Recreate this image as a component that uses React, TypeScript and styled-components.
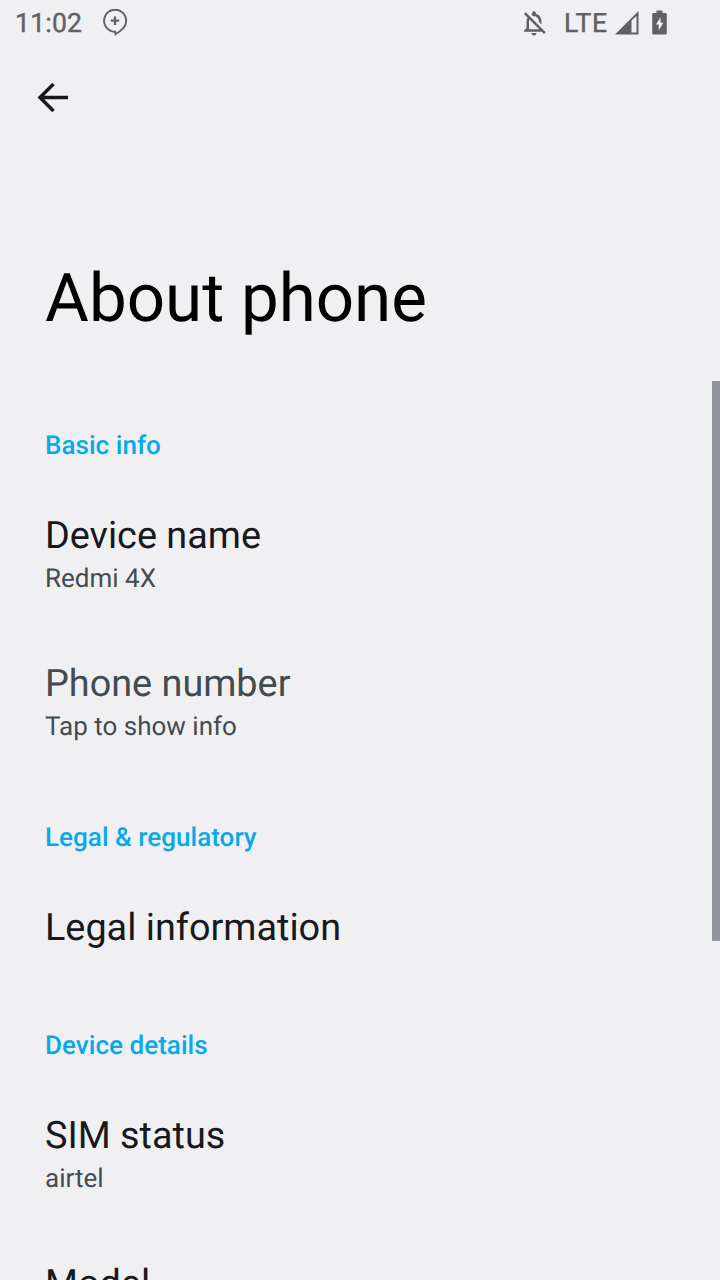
import React from "react";
import styled, { createGlobalStyle } from "styled-components";

const GlobalStyle = createGlobalStyle`
  * { box-sizing: border-box; }
  html, body { margin: 0; background: #f0f0f2; }
  body { font-family: Roboto, sans-serif; text-rendering: geometricPrecision; overflow: hidden; }
`;

const Screen = styled.main`
  position: relative;
  display: flex;
  flex-direction: column;
  width: 720px;
  height: 1280px;
  overflow: hidden;
  background: #f0f0f2;
`;

const StatusBar = styled.header`
  display: flex;
  align-items: center;
  flex: none;
  height: 48px;
  padding: 0 52px 3px 15px;
  color: #616163;
  font-size: 26.6px;
  font-weight: 400;
  -webkit-text-stroke: 0.4px #616163;
`;

const Clock = styled.span`
  width: 67px;
  margin-right: 20px;
  padding-top: 2px;
  letter-spacing: 0.2px;
`;

const StatusIcons = styled.div`
  display: flex;
  align-items: center;
  margin-left: auto;
`;

const Network = styled.span`
  width: 44px;
  margin: 0 6px 0 15px;
  padding-top: 1px;
  letter-spacing: 0.7px;
`;

const Battery = styled.svg`
  display: block;
  flex: none;
  margin-left: 12px;
`;

const Icon = styled.svg`
  display: block;
  flex: none;
`;

const Toolbar = styled.nav`
  display: flex;
  flex: none;
  height: 213px;
  padding: 30px 0 0 33px;
`;

const BackButton = styled.button`
  width: 40px;
  height: 40px;
  padding: 0;
  border: 0;
  background: none;
  color: #17181b;
`;

const Title = styled.h1`
  flex: none;
  height: 152px;
  margin: 0;
  padding-left: 45px;
  font-size: 67.3px;
  font-weight: 400;
  line-height: 76px;
  color: #000;
`;

const Category = styled.h2`
  flex: none;
  height: 90px;
  margin: 0;
  padding: 18px 45px 0;
  font-size: 26px;
  font-weight: 500;
  line-height: 30px;
  letter-spacing: 0.04px;
  color: #08a9e8;
`;

const Row = styled.section<{ $height: number; $muted?: boolean }>`
  flex: none;
  height: ${(p) => p.$height}px;
  padding: 10px 45px 0;
  color: ${(p) => (p.$muted ? "#434a50" : "#17191d")};
`;

const RowTitle = styled.div`
  font-size: 37.8px;
  line-height: 46px;
`;

const Summary = styled.div`
  margin-top: 5px;
  font-size: 26px;
  line-height: 30px;
  color: #454a50;
`;

const ScrollThumb = styled.div`
  position: absolute;
  top: 381px;
  right: 0;
  width: 8px;
  height: 560px;
  background: #92959b;
`;

export default function App() {
  return (
    <>
      <GlobalStyle />
      <Screen>
        <StatusBar>
          <Clock>11:02</Clock>
          <Icon width="26" height="28" viewBox="0 0 26 28" fill="none" stroke="currentColor" strokeWidth="1.9">
            <path d="M10 22.300A11 11 0 1 1 20.500 19.900Q17.500 23 13.500 25.300L13 22.600Q11.500 22.700 10 22.300" />
            <path d="M13 7.500v8.400M8.800 11.700h8.400" strokeWidth="2.3" />
          </Icon>
          <StatusIcons>
            <Icon width="30" height="30" viewBox="0 0 24 24" fill="currentColor">
              <path d="M12 22c1.100 0 2-.9 2-2h-4c0 1.100.9 2 2 2zm0-15.500c2.490 0 4 2.020 4 4.500v.1l2 2V11c0-3.070-1.630-5.640-4.500-6.320V4c0-.83-.67-1.500-1.500-1.500s-1.500.67-1.500 1.500v.68c-.24.060-.47.150-.69.230l1.640 1.640c.18-.02.36-.05.55-.05zM5.410 3.350L4 4.760l2.810 2.810C6.290 8.570 6 9.740 6 11v5l-2 2v1h14.240l1.740 1.740 1.410-1.410L5.410 3.350zM16 17H8v-6c0-.68.12-1.320.34-1.900L16 16.760V17z" />
            </Icon>
            <Network>LTE</Network>
            <Icon width="26" height="26" viewBox="0 0 26 26" fill="currentColor">
              <path fillRule="evenodd" d="M1 24.500L24.500 1V24.500ZM17.500 10.500V22.500H22.500V6Z" />
            </Icon>
            <Battery width="16" height="26" viewBox="0 0 16 26" fill="currentColor">
              <path fillRule="evenodd" d="M4.500 .5h6v2.500h3q1.300 0 1.300 1.300v18.900q0 1.300-1.300 1.300H1.500q-1.300 0-1.300-1.300V4.300q0-1.300 1.300-1.300H4.500ZM8.600 7.300L4 14.500h2.700v6L11.300 12.800H8.600Z" />
            </Battery>
          </StatusIcons>
        </StatusBar>
        <Toolbar>
          <BackButton aria-label="Back">
            <Icon width="40" height="40" viewBox="0 0 40 40" fill="none" stroke="currentColor" strokeWidth="3.500">
              <path d="M35 19.500H7.500M20.500 6L7 19.500L20.500 33" />
            </Icon>
          </BackButton>
        </Toolbar>
        <Title>About phone</Title>
        <Category>Basic info</Category>
        <Row $height={148}>
          <RowTitle>Device name</RowTitle>
          <Summary>Redmi 4X</Summary>
        </Row>
        <Row $height={154} $muted>
          <RowTitle>Phone number</RowTitle>
          <Summary>Tap to show info</Summary>
        </Row>
        <Category>Legal &amp; regulatory</Category>
        <Row $height={118}>
          <RowTitle>Legal information</RowTitle>
        </Row>
        <Category>Device details</Category>
        <Row $height={148}>
          <RowTitle>SIM status</RowTitle>
          <Summary>airtel</Summary>
        </Row>
        <Row $height={148}>
          <RowTitle>Model</RowTitle>
        </Row>
        <ScrollThumb />
      </Screen>
    </>
  );
}
